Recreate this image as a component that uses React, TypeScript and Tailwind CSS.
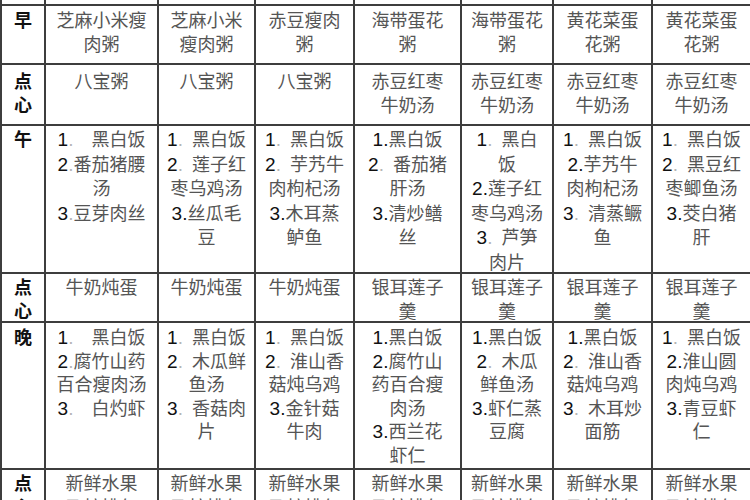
import React from "react";

// 一周食谱表（顶部表头被裁切，只露出底边）
const days = ["星期一", "星期二", "星期三", "星期四", "星期五", "星期六", "星期日"];

type Row = {
  label: string[];
  cells: string[][];
  pad: string;
  lineH: string;
};

const rows: Row[] = [
  {
    label: ["早"],
    pad: "pt-[2px]",
    lineH: "h-[23.5px] leading-[23.5px]",
    cells: [
      ["芝麻小米瘦", "肉粥"],
      ["芝麻小米", "瘦肉粥"],
      ["赤豆瘦肉", "粥"],
      ["海带蛋花", "粥"],
      ["海带蛋花", "粥"],
      ["黄花菜蛋", "花粥"],
      ["黄花菜蛋", "花粥"],
    ],
  },
  {
    label: ["点", "心"],
    pad: "pt-[3px]",
    lineH: "h-[24px] leading-[24px]",
    cells: [
      ["八宝粥"],
      ["八宝粥"],
      ["八宝粥"],
      ["赤豆红枣", "牛奶汤"],
      ["赤豆红枣", "牛奶汤"],
      ["赤豆红枣", "牛奶汤"],
      ["赤豆红枣", "牛奶汤"],
    ],
  },
  {
    label: ["午"],
    pad: "pt-0",
    lineH: "h-[24.5px] leading-[24.5px]",
    cells: [
      ["1。　黑白饭", "2。番茄猪腰", "汤", "3。豆芽肉丝"],
      ["1。 黑白饭", "2。 莲子红", "枣乌鸡汤", "3.丝瓜毛", "豆"],
      ["1。 黑白饭", "2。 芋艿牛", "肉枸杞汤", "3.木耳蒸", "鲈鱼"],
      ["1.黑白饭", "2。 番茄猪", "肝汤", "3.清炒鳝", "丝"],
      ["1。 黑白", "饭", "2.莲子红", "枣乌鸡汤", "3。 芦笋", "肉片"],
      ["1。 黑白饭", "2.芋艿牛", "肉枸杞汤", "3。 清蒸鳜", "鱼"],
      ["1。 黑白饭", "2。 黑豆红", "枣鲫鱼汤", "3.茭白猪", "肝"],
    ],
  },
  {
    label: ["点", "心"],
    pad: "pt-0",
    lineH: "h-[24px] leading-[24px]",
    cells: [
      ["牛奶炖蛋"],
      ["牛奶炖蛋"],
      ["牛奶炖蛋"],
      ["银耳莲子", "羹"],
      ["银耳莲子", "羹"],
      ["银耳莲子", "羹"],
      ["银耳莲子", "羹"],
    ],
  },
  {
    label: ["晚"],
    pad: "pt-[2px]",
    lineH: "h-[23.5px] leading-[23.5px]",
    cells: [
      ["1。　黑白饭", "2。腐竹山药", "百合瘦肉汤", "3。　白灼虾"],
      ["1。 黑白饭", "2。 木瓜鲜", "鱼汤", "3。 香菇肉", "片"],
      ["1。 黑白饭", "2。 淮山香", "菇炖乌鸡", "3.金针菇", "牛肉"],
      ["1.黑白饭", "2.腐竹山", "药百合瘦", "肉汤", "3.西兰花", "虾仁"],
      ["1.黑白饭", "2。 木瓜", "鲜鱼汤", "3.虾仁蒸", "豆腐"],
      ["1.黑白饭", "2。 淮山香", "菇炖乌鸡", "3。 木耳炒", "面筋"],
      ["1。 黑白饭", "2.淮山圆", "肉炖乌鸡", "3.青豆虾", "仁"],
    ],
  },
  {
    label: ["点", "心"],
    pad: "pt-0",
    lineH: "h-[24px] leading-[24px]",
    cells: Array.from({ length: 7 }, () => ["新鲜水果", "及核桃仁"]),
  },
];

function Line({ text, lineH }: { text: string; lineH: string }) {
  const m = text.match(/^(\d)(\.|。)( |　)?(.*)$/);
  if (!m) return <div className={`whitespace-nowrap ${lineH}`}>{text}</div>;
  const [, num, dot, gap, rest] = m;
  return (
    <div className={`whitespace-nowrap ${lineH}`}>
      <span className="font-['Liberation_Sans',sans-serif] text-[19px] leading-none text-[#111]">{num}</span>
      <span
        className={
          "font-['Liberation_Sans',sans-serif] text-[19px] leading-none " +
          (dot === "." ? "text-[#111]" : "text-[#b5b5b5]") +
          (gap === "　" ? " mr-[18px]" : gap === " " ? " mr-[9px]" : "")
        }
      >
        .
      </span>
      {rest}
    </div>
  );
}

export default function App() {
  return (
    <div className="w-[750px] h-[500px] overflow-hidden bg-white font-['Noto_Sans_CJK_SC',sans-serif]">
      <div className="-mt-[26px] w-[752px] grid grid-cols-[42px_111px_95px_97px_105px_90px_97px_97px] grid-rows-[28px_57px_59px_146px_47px_145px_70px] gap-[2px] bg-[#3d3d3d] p-[2px]">
        {/* 表头 */}
        <div className="bg-white" />
        {days.map((d) => (
          <div key={d} className="bg-white flex items-end justify-center text-[18px] leading-[24px] text-[#555] overflow-hidden">
            <span className="pb-[7px]">{d}</span>
          </div>
        ))}

        {rows.map((row, ri) => (
          <React.Fragment key={ri}>
            <div className={`bg-white ${row.pad} text-center text-[18px] font-bold text-[#111]`}>
              {row.label.map((l, i) => (
                <div key={i} className={row.lineH}>
                  {l}
                </div>
              ))}
            </div>
            {row.cells.map((cell, ci) => (
              <div key={ci} className={`bg-white ${row.pad} text-center text-[18px] text-[#555] overflow-hidden`}>
                {cell.map((t, i) => (
                  <Line key={i} text={t} lineH={row.lineH} />
                ))}
              </div>
            ))}
          </React.Fragment>
        ))}
      </div>
    </div>
  );
}
